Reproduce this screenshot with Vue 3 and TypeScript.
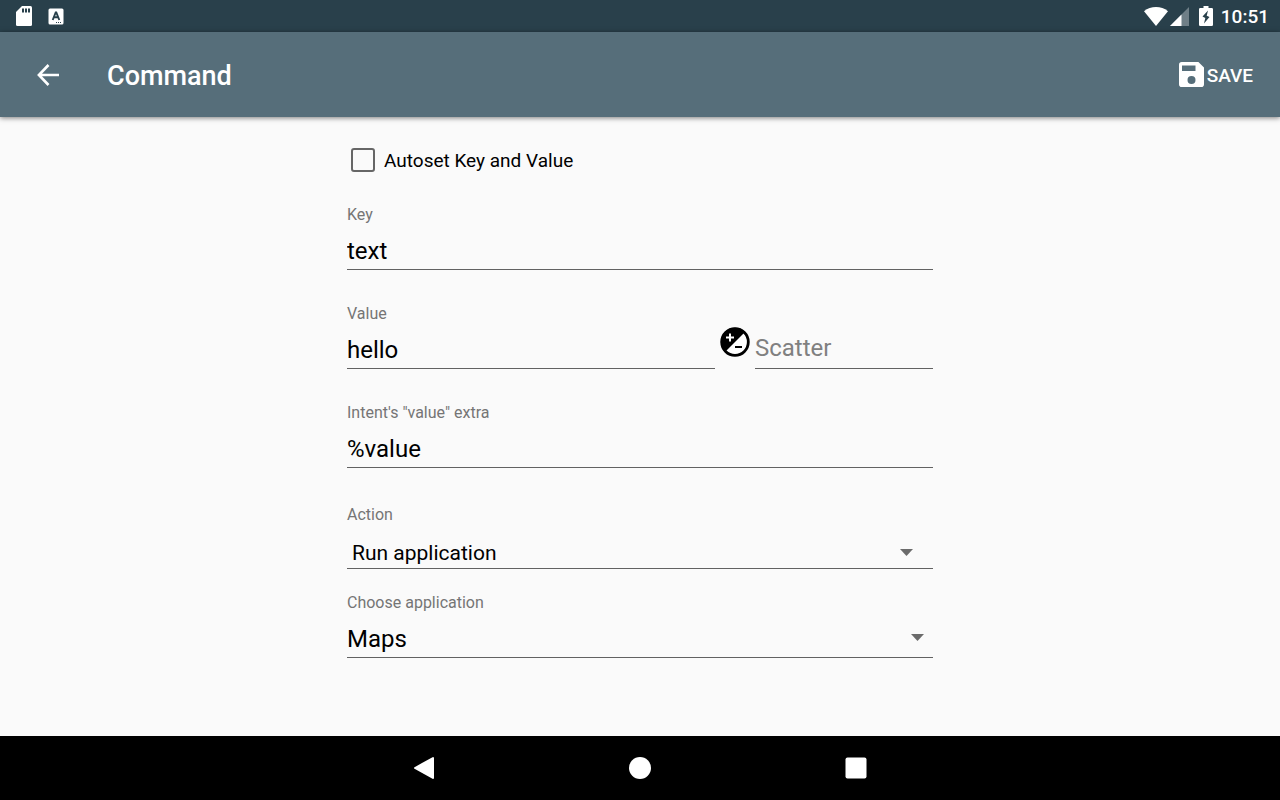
<script setup lang="ts">
import { ref } from 'vue'

const autoset = ref(false)
const key = ref('text')
const value = ref('hello')
const scatter = ref('')
const extra = ref('%value')
const action = ref('Run application')
const application = ref('Maps')
</script>

<template>
  <div class="screen">
    <div class="status">
      <div class="status-group notices">
        <svg width="16" height="20" viewBox="0 0 16 20" aria-label="SD card">
          <path fill="#fff" d="M6 0h8.500q1.500 0 1.500 1.500v17q0 1.500-1.500 1.500h-13q-1.500 0-1.500-1.500V6z" />
          <path fill="#29404b" d="M6 2.500h2v4H6zM9 2.500h2v4H9zM12 2.500h2v4h-2z" />
        </svg>
        <svg width="16" height="17" viewBox="0 0 16 17" aria-label="Keyboard">
          <rect x="0.500" y="0.500" width="15" height="16" rx="1.500" fill="#fff" />
          <path fill="none" stroke="#29404b" stroke-width="1.900" d="M4.700 12 7.700 4.500h.6l3 7.500M5.800 9.300h4.400" />
          <path stroke="#29404b" stroke-width="1" stroke-dasharray="1 1" d="M8 14.500h6" />
        </svg>
      </div>
      <div class="status-group">
        <svg width="24" height="19" viewBox="0 0 24 19" aria-label="Wi-Fi">
          <path fill="#fff" d="M0 4.200Q5.300 0 12 0t12 4.200L12 19z" />
        </svg>
        <svg class="cell" width="19" height="19" viewBox="0 0 19 19" aria-label="Signal">
          <path fill="#6f7f87" d="M0 19 19 0v19z" />
          <path fill="#fff" d="M0 19 11.500 7.500V19z" />
        </svg>
        <svg class="battery" width="14" height="20" viewBox="0 0 14 20" aria-label="Charging">
          <path fill="#fff" d="M4.500 0h5v2h3.200q1.300 0 1.300 1.300v15.400q0 1.300-1.300 1.300H1.300Q0 20 0 18.700V3.300Q0 2 1.300 2h3.200z" />
          <path fill="#29404b" d="M9 4.500 3.500 10.500 6.300 12 5 17.500 10.500 11 7.700 9.700z" />
        </svg>
        <span class="clock">10:51</span>
      </div>
    </div>

    <header class="toolbar">
      <button class="back" type="button" aria-label="Back">
        <svg width="22" height="22" viewBox="0 0 22 22">
          <path fill="none" stroke="#fff" stroke-width="2.600" d="M11.500 1 1.900 11l9.600 10M1.900 11H22" />
        </svg>
      </button>
      <h1>Command</h1>
      <button class="save" type="button">
        <svg width="25" height="25" viewBox="0 0 25 25">
          <path fill="#fff" fill-rule="evenodd" d="M2.800 0H19.400L25 5.600V22.200Q25 25 22.200 25H2.800Q0 25 0 22.200V2.800Q0 0 2.800 0zM3 3.500V9H16.500V3.500zM12.500 14a4 4 0 1 0 0 8 4 4 0 0 0 0-8z" />
        </svg>
        <span>SAVE</span>
      </button>
    </header>

    <main>
      <form @submit.prevent>
        <label class="check">
          <input v-model="autoset" type="checkbox" />
          <span>Autoset Key and Value</span>
        </label>

        <div class="field">
          <label for="key">Key</label>
          <input id="key" v-model="key" type="text" />
        </div>

        <div class="row">
          <div class="field grow">
            <label for="value">Value</label>
            <input id="value" v-model="value" type="text" />
          </div>
          <svg class="exposure" width="30" height="30" viewBox="0 0 30 30" aria-hidden="true">
            <circle cx="15" cy="15" r="13.300" fill="#fff" stroke="#000" stroke-width="2.800" />
            <path fill="#000" d="M5 25A14.100 14.100 0 0 1 25 5z" />
            <path stroke="#fff" stroke-width="2" d="M6 10.500h8M10 6.500v8" />
            <path stroke="#000" stroke-width="2" d="M15 20h7" />
          </svg>
          <div class="field scatter">
            <input v-model="scatter" type="text" placeholder="Scatter" aria-label="Scatter" />
          </div>
        </div>

        <div class="field">
          <label for="extra">Intent's "value" extra</label>
          <input id="extra" v-model="extra" type="text" />
        </div>

        <div class="field action">
          <label for="action">Action</label>
          <div class="picker">
            <select id="action" v-model="action">
              <option>Run application</option>
            </select>
            <svg width="13" height="7" viewBox="0 0 13 7" aria-hidden="true"><path fill="#6b6b6b" d="M0 0h13L6.500 7z" /></svg>
          </div>
        </div>

        <div class="field application">
          <label for="application">Choose application</label>
          <div class="picker">
            <select id="application" v-model="application">
              <option>Maps</option>
            </select>
            <svg width="13" height="7" viewBox="0 0 13 7" aria-hidden="true"><path fill="#6b6b6b" d="M0 0h13L6.500 7z" /></svg>
          </div>
        </div>
      </form>
    </main>

    <nav>
      <button type="button" aria-label="Back">
        <svg width="22" height="24" viewBox="0 0 22 24"><path fill="#fff" stroke="#fff" stroke-width="2" stroke-linejoin="round" d="M2 12 20 2v20z" /></svg>
      </button>
      <button type="button" aria-label="Home">
        <svg width="22" height="22" viewBox="0 0 22 22"><circle cx="11" cy="11" r="11" fill="#fff" /></svg>
      </button>
      <button type="button" aria-label="Recent apps">
        <svg width="22" height="22" viewBox="0 0 22 22"><rect x="0.500" y="0.500" width="21" height="21" rx="2" fill="#fff" /></svg>
      </button>
    </nav>
  </div>
</template>

<style>
body {
  margin: 0;
  background: #fafafa;
}
</style>

<style scoped>
.screen {
  display: flex;
  flex-direction: column;
  min-height: 100vh;
  background: #fafafa;
  color: #000;
  font-family: Roboto, sans-serif;
}

svg {
  display: block;
  flex: none;
}

button {
  display: flex;
  align-items: center;
  justify-content: center;
  padding: 0;
  border: 0;
  background: none;
  color: inherit;
  font: inherit;
}

.status {
  display: flex;
  align-items: center;
  justify-content: space-between;
  height: 32px;
  padding: 0 11px 0 16px;
  box-sizing: border-box;
  background: #29404b;
  color: #fff;
}

.status-group {
  display: flex;
  align-items: center;
}

.notices {
  gap: 16px;
}

.cell {
  margin-left: 2px;
}

.battery {
  margin: 0 8px 0 10px;
}

.clock {
  padding-top: 2px;
  font-size: 19px;
  font-weight: 500;
  line-height: 24px;
}

.toolbar {
  display: flex;
  align-items: center;
  height: 85px;
  padding: 0 27px 0 37px;
  box-sizing: border-box;
  background: #566e7a;
  color: #fff;
  box-shadow: 0 1px 5px rgba(0, 0, 0, 0.5);
}

h1 {
  flex: 1;
  margin: 0 0 0 48px;
  padding-top: 4px;
  font-size: 27px;
  font-weight: 500;
  line-height: 33px;
}

.save {
  gap: 3px;
  font-size: 19px;
  font-weight: 500;
  line-height: 23px;
}

.save span {
  padding-top: 2px;
}

main {
  flex: 1;
  padding: 31px 24px;
}

form {
  display: flex;
  flex-direction: column;
  gap: 34px;
  max-width: 586px;
  margin: 0 auto;
}

.check {
  display: flex;
  align-items: center;
  gap: 9px;
  height: 24px;
  margin-bottom: -1px;
  padding-left: 4px;
  font-size: 19px;
}

.check input {
  appearance: none;
  width: 24px;
  height: 24px;
  margin: 0;
  border: 2px solid #666;
  border-radius: 3px;
}

.check input:checked {
  background: #566e7a;
}

.field label {
  display: block;
  color: #757575;
  font-size: 16px;
  line-height: 20px;
}

.field input,
.field select {
  appearance: none;
  display: block;
  width: 100%;
  height: 45px;
  padding: 12px 0 4px;
  box-sizing: border-box;
  border: 0;
  border-bottom: 1px solid #626262;
  border-radius: 0;
  outline: 0;
  background: none;
  color: #000;
  font-family: inherit;
  font-size: 24px;
  line-height: 28px;
}

.row {
  display: flex;
  align-items: flex-end;
  gap: 5px;
}

.grow {
  flex: 1;
}

.exposure {
  margin-bottom: 12px;
}

.scatter {
  width: 178px;
}

.scatter input {
  padding: 10px 0 6px;
}

.scatter input::placeholder {
  color: #808080;
  opacity: 1;
}

.picker {
  position: relative;
}

.picker svg {
  position: absolute;
  right: 9px;
  bottom: 17px;
  pointer-events: none;
}

.action {
  margin-top: 3px;
}

.action select {
  height: 44px;
  padding: 13px 5px 0;
  font-size: 21px;
}

.action .picker svg {
  right: 20px;
  bottom: 13px;
}

.application {
  margin-top: -10px;
}

nav {
  display: flex;
  justify-content: center;
  height: 64px;
  background: #000;
}

nav button {
  width: 216px;
}
</style>
